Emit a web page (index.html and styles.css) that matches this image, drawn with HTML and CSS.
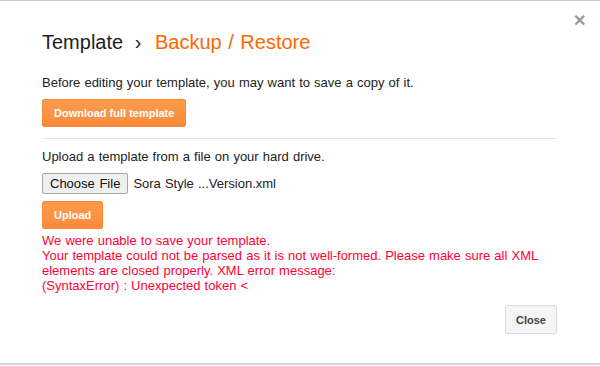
FILE: index.html
```html
<!DOCTYPE html>
<html lang="en">
<head>
    <meta charset="UTF-8">
    <title>Template - Backup / Restore</title>
    <link rel="stylesheet" href="styles.css">
</head>
<body>
    <div class="dialog">
        <span class="close-x">&#x2715;</span>
        <h1 class="title">Template <span class="sep">&rsaquo;</span> <span class="current">Backup / Restore</span></h1>

        <div class="section">
            <p>Before editing your template, you may want to save a copy of it.</p>
            <button class="btn-orange">Download full template</button>
        </div>

        <div class="section upload">
            <p>Upload a template from a file on your hard drive.</p>
            <div class="file-row">
                <button class="btn-file">Choose File</button>
                <span class="file-name">Sora Style ...Version.xml</span>
            </div>
            <button class="btn-orange">Upload</button>
            <div class="error">
                We were unable to save your template.<br>
                Your template could not be parsed as it is not well-formed. Please make sure all XML elements are closed properly. XML error message:<br>
                (SyntaxError) : Unexpected token &lt;
            </div>
        </div>

        <div class="footer">
            <button class="btn-grey">Close</button>
        </div>
    </div>
</body>
</html>
```

FILE: styles.css
```css
body {
    margin: 0;
    font-family: Arial, "Liberation Sans", sans-serif;
    background: #fff;
}
.dialog {
    position: relative;
    box-sizing: border-box;
    height: 365px;
    border-top: 1px solid #ccc;
    border-bottom: 2px solid #d4d4d4;
    padding: 0 43px 0 42px;
    display: flex;
    flex-direction: column;
}
.close-x {
    position: absolute;
    top: 10px;
    right: 14px;
    color: #999;
    font-size: 16px;
    font-weight: bold;
}
.title {
    margin: 30px 0 0;
    font-size: 20px;
    font-weight: normal;
    color: #222;
    word-spacing: 1px;
}
.title .sep {
    margin: 0 7px 0 5px;
}
.title .current {
    color: #ff6600;
}
p {
    margin: 0;
    font-size: 13px;
    color: #222;
    word-spacing: 0.5px;
}
.section {
    padding-bottom: 11px;
}
.section p {
    margin: 0 0 9px;
}
.dialog > .section:first-of-type {
    margin-top: 21px;
    border-bottom: 1px solid #e5e5e5;
}
.upload {
    padding-top: 10px;
    padding-bottom: 0;
}
.btn-orange {
    display: block;
    height: 28px;
    padding: 0 11px;
    border: 1px solid #f58a3c;
    border-radius: 2px;
    background: linear-gradient(#fd9c4c, #f98a3a);
    color: #fff;
    font-family: Arial, "Liberation Sans", sans-serif;
    font-size: 11px;
    font-weight: bold;
}
.file-row {
    display: flex;
    align-items: center;
    margin-bottom: 7px;
}
.btn-file {
    height: 21px;
    padding: 0 7px;
    border: 1px solid #a6a6a6;
    border-radius: 2px;
    background: #efefef;
    color: #111;
    font-family: Arial, "Liberation Sans", sans-serif;
    font-size: 13px;
    word-spacing: 1px;
}
.file-name {
    margin-left: 5px;
    font-size: 13px;
    color: #222;
    word-spacing: 0.5px;
}
.error {
    margin-top: 4px;
    font-size: 13px;
    line-height: 15px;
    color: #ff0033;
    word-spacing: 0.5px;
}
.footer {
    margin-top: auto;
    display: flex;
    justify-content: flex-end;
    padding-bottom: 29px;
}
.btn-grey {
    height: 29px;
    padding: 0 10px;
    border: 1px solid #dcdcdc;
    border-radius: 2px;
    background: #f5f5f5;
    color: #444;
    font-family: Arial, "Liberation Sans", sans-serif;
    font-size: 11px;
    font-weight: bold;
}
```
